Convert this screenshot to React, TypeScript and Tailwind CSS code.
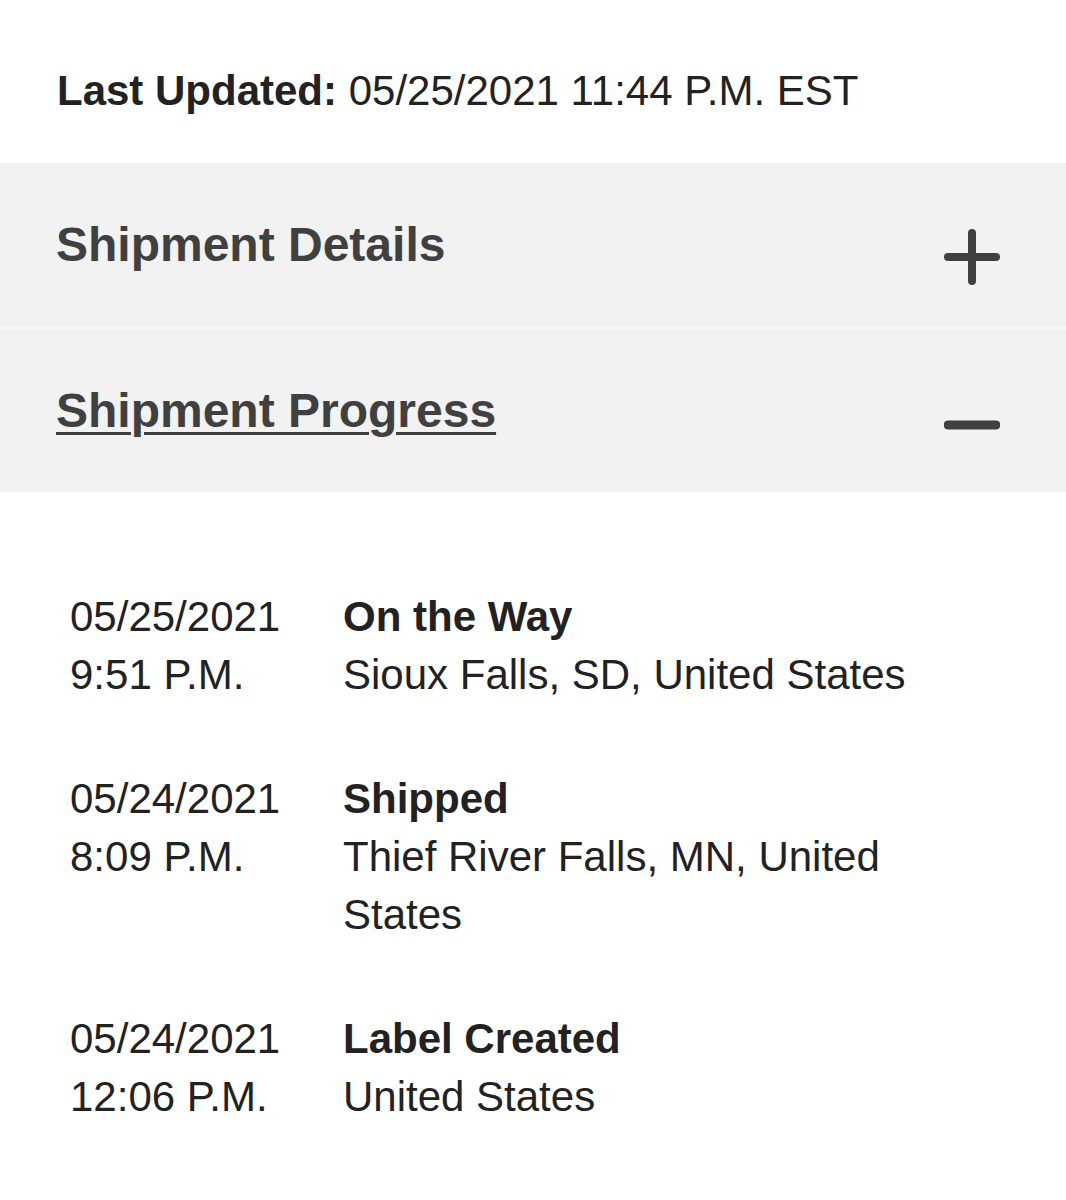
import React from "react";

const events = [
  { date: "05/25/2021", time: "9:51 P.M.", title: "On the Way", place: "Sioux Falls, SD, United States" },
  { date: "05/24/2021", time: "8:09 P.M.", title: "Shipped", place: "Thief River Falls, MN, United States" },
  { date: "05/24/2021", time: "12:06 P.M.", title: "Label Created", place: "United States" },
];

function Plus() {
  return (
    <svg width="56" height="56" viewBox="0 0 56 56" className="mt-6">
      <path d="M28 4V52M4 28H52" stroke="#404040" strokeWidth="8" strokeLinecap="round" />
    </svg>
  );
}

function Minus() {
  return (
    <svg width="56" height="56" viewBox="0 0 56 56" className="mt-7">
      <path d="M4 28H52" stroke="#404040" strokeWidth="9" strokeLinecap="round" />
    </svg>
  );
}

export default function App() {
  return (
    <div className="w-[1066px] h-[1200px] bg-white text-[#222]" style={{ fontFamily: '"Liberation Sans", Arial, sans-serif' }}>
      <div className="pl-[57px] pt-[66px] pb-[48px] text-[42px] leading-[49px]">
        <span className="font-bold">Last Updated:</span> 05/25/2021 11:44 P.M. EST
      </div>
      <div className="bg-[#f2f2f2]">
        <div className="h-[164px] flex items-center justify-between pl-[56px] pr-[66px]">
          <span className="text-[48px] font-bold text-[#404040]">Shipment Details</span>
          <Plus />
        </div>
        <div className="h-[2px] bg-[#f8f8f8]" />
        <div className="h-[163px] flex items-center justify-between pl-[56px] pr-[66px]">
          <span className="text-[48px] font-bold text-[#404040] underline decoration-[3px] underline-offset-[5px]">Shipment Progress</span>
          <Minus />
        </div>
      </div>
      <div className="pl-[70px] pr-[100px] pt-[96px] flex flex-col gap-[66px] text-[42px] leading-[58px]">
        {events.map((e, i) => (
          <div key={i} className="grid grid-cols-[273px_1fr]">
            <div>
              <div>{e.date}</div>
              <div>{e.time}</div>
            </div>
            <div>
              <div className="font-bold">{e.title}</div>
              <div>{e.place}</div>
            </div>
          </div>
        ))}
      </div>
    </div>
  );
}
